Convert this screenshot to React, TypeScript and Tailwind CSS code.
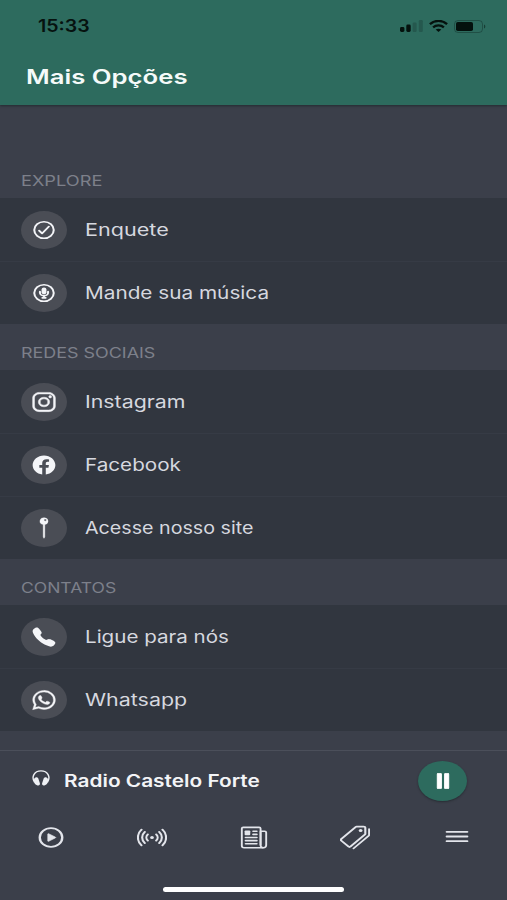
import clsx from "clsx";
import type { IconType } from "react-icons";
import {
    IoCall,
    IoCheckmarkCircleOutline,
    IoLogoFacebook,
    IoLogoInstagram,
    IoLogoWhatsapp,
    IoMenuOutline,
    IoMicCircleOutline,
    IoNewspaperOutline,
    IoPause,
    IoPin,
    IoPlayCircleOutline,
    IoPricetagsOutline,
    IoRadioOutline,
} from "react-icons/io5";

interface Option {
    label: string;
    icon: IconType;
    stretch: string;
    iconClass?: string;
}

interface Section {
    title: string;
    stretch: string;
    titleClass: string;
    options: Option[];
}

const sections: Section[] = [
    {
        title: "EXPLORE",
        stretch: "scale-x-[1.3]",
        titleClass: "h-[93px] pt-[60px]",
        options: [
            { label: "Enquete", icon: IoCheckmarkCircleOutline, stretch: "scale-x-[1.27]", iconClass: "[&_path]:[stroke-width:40px]" },
            { label: "Mande sua música", icon: IoMicCircleOutline, stretch: "scale-x-[1.22]", iconClass: "[&_path]:[stroke-width:40px]" },
        ],
    },
    {
        title: "REDES SOCIAIS",
        stretch: "scale-x-[1.28]",
        titleClass: "h-[46px] pt-[13px]",
        options: [
            { label: "Instagram", icon: IoLogoInstagram, stretch: "scale-x-[1.255]", iconClass: "[&_path]:[stroke-width:10px]" },
            { label: "Facebook", icon: IoLogoFacebook, stretch: "scale-x-[1.215]" },
            { label: "Acesse nosso site", icon: IoPin, stretch: "scale-x-[1.157]", iconClass: "[&_path]:[stroke-width:8px]" },
        ],
    },
    {
        title: "CONTATOS",
        stretch: "scale-x-[1.25]",
        titleClass: "h-[46px] pt-[13px]",
        options: [
            { label: "Ligue para nós", icon: IoCall, stretch: "scale-x-[1.21]" },
            { label: "Whatsapp", icon: IoLogoWhatsapp, stretch: "scale-x-[1.26]", iconClass: "[&_path]:[stroke-width:8px]" },
        ],
    },
];

const tabs: { name: string; icon: IconType; iconClass: string }[] = [
    { name: "Ao vivo", icon: IoPlayCircleOutline, iconClass: "[&_path:first-of-type]:[stroke-width:40px] [&_path:last-of-type]:[stroke-width:10px]" },
    { name: "Rádio", icon: IoRadioOutline, iconClass: "[&_path]:[stroke-width:36px]" },
    { name: "Notícias", icon: IoNewspaperOutline, iconClass: "ml-[2px]" },
    { name: "Promoções", icon: IoPricetagsOutline, iconClass: "[&_path:first-of-type]:[stroke-width:36px]" },
    { name: "Mais", icon: IoMenuOutline, iconClass: "[&_path]:[stroke-width:36px] ml-[2px] -mt-[2px]" },
];

function StatusBar() {
    return (
        <div className="flex h-[52px] items-center justify-between pl-[38px] pr-[21px]">
            <span className="inline-block origin-left scale-x-[1.15] text-[17px] font-semibold leading-5 text-[#06120f]">
                15:33
            </span>
            <div className="flex items-center text-[#04110d]">
                <svg className="h-3 w-[23px]" viewBox="0 0 23 12" fill="currentColor">
                    <rect x="0" y="7" width="4.4" height="5" rx="1.4" />
                    <rect x="6.3" y="4.6" width="4.4" height="7.4" rx="1.4" />
                    <rect x="12.6" y="2.5" width="4" height="9.5" rx="1.2" opacity="0.2" />
                    <rect x="18.8" y="0" width="4" height="12" rx="1.2" opacity="0.2" />
                </svg>
                <svg className="ml-[6px] h-3 w-[19px]" viewBox="0 0 19 12" fill="none" stroke="currentColor" strokeWidth="2.3">
                    <path d="M.9 4.2C5.7-.2 13.3-.2 18.1 4.2" />
                    <path d="M4.1 7.4c3-2.7 7.8-2.7 10.8 0" />
                    <path d="M9.5 12 6.7 9.6c1.6-1.3 4-1.3 5.6 0Z" fill="currentColor" stroke="none" />
                </svg>
                <svg className="ml-[6px] h-[13px] w-[32px]" viewBox="0 0 32 13">
                    <rect x=".5" y=".5" width="28" height="12" rx="3.5" fill="none" stroke="currentColor" opacity="0.3" />
                    <rect x="2" y="2" width="17" height="9" rx="1.8" fill="currentColor" />
                    <path d="M30 4.5c1.8.6 1.8 3.4 0 4Z" fill="currentColor" opacity="0.5" />
                </svg>
            </div>
        </div>
    );
}

function HeadphonesIcon({ className }: { className?: string }) {
    return (
        <svg className={className} viewBox="0 0 18 16" aria-hidden="true">
            <path d="M2.6 12.4C-1 7 2.2.9 9 .9s10 6.1 6.4 11.5" fill="none" stroke="currentColor" strokeWidth="1.4" />
            <path d="M2.4 8.2c1.5-1.5 3.4-1.2 4 .5l1.5 4.6c.4 1.6-.9 2.6-2.3 2.1C2.6 14.4 1 11.6 2.4 8.2Z" fill="currentColor" />
            <path d="M15.6 8.2c-1.5-1.5-3.4-1.2-4 .5l-1.5 4.6c-.4 1.6.9 2.6 2.3 2.1 3-1 4.6-3.8 3.2-7.2Z" fill="currentColor" />
        </svg>
    );
}

function OptionRow({ option }: { option: Option }) {
    const Icon = option.icon;
    return (
        <li className="flex h-[63px] items-center border-t border-[#363b45] pl-[21px] first:border-transparent">
            <span className="flex h-[38px] w-[46px] items-center justify-center rounded-[50%] bg-[#4a4d55] text-[#f4f5f8]">
                <Icon preserveAspectRatio="none" className={clsx("-ml-px h-[22px] w-[26px]", option.iconClass)} />
            </span>
            <span className={clsx("ml-[18px] inline-block origin-left whitespace-nowrap text-[17px] leading-6 text-[#d6d8df]", option.stretch)}>
                {option.label}
            </span>
        </li>
    );
}

export default function App() {
    return (
        <div className="flex h-[900px] w-[507px] flex-col overflow-hidden bg-[#3b3f4a] font-['Inter',sans-serif]">
            <header className="h-[105px] shrink-0 bg-[#2d6b5e] shadow-[0_1px_2px_rgba(20,30,35,0.6)]">
                <StatusBar />
                <h1 className="ml-[26px] mt-[11px] inline-block origin-left scale-x-[1.285] text-[20px] font-semibold leading-7 text-[#f5faf9]">
                    Mais Opções
                </h1>
            </header>

            <main className="h-[645px] shrink-0">
                {sections.map((section) => (
                    <section key={section.title}>
                        <h2 className={clsx("pl-[21px] text-[14px] text-[#7d808a]", section.titleClass)}>
                            <span className={clsx("block w-fit origin-left leading-8", section.stretch)}>{section.title}</span>
                        </h2>
                        <ul className="bg-[#31363f]">
                            {section.options.map((option) => (
                                <OptionRow key={option.label} option={option} />
                            ))}
                        </ul>
                    </section>
                ))}
            </main>

            <footer className="flex-1 border-t border-[#4b4f5a]">
                <div className="flex h-[59px] items-center pl-[32px] pr-[40px]">
                    <HeadphonesIcon className="-mt-[6px] h-4 w-[18px] text-[#eef0f4]" />
                    <span className="ml-[14px] inline-block origin-left scale-x-[1.225] whitespace-nowrap text-[17px] font-semibold leading-6 text-[#f3f4f7]">
                        Radio Castelo Forte
                    </span>
                    <button
                        aria-label="Pausar"
                        className="ml-auto flex h-10 w-[49px] items-center justify-center rounded-[50%] bg-[#2d6b5e] text-white shadow-[0_1px_2px_rgba(20,25,30,0.5)]"
                    >
                        <IoPause preserveAspectRatio="none" className="h-[22px] w-[26px] [&_path]:[stroke-width:20px]" />
                    </button>
                </div>
                <nav className="grid h-[54px] grid-cols-5">
                    {tabs.map(({ name, icon: Icon, iconClass }) => (
                        <button key={name} aria-label={name} className="flex items-center justify-center text-[#e3e5eb]">
                            <Icon preserveAspectRatio="none" className={clsx("h-[25px] w-[30px]", iconClass)} />
                        </button>
                    ))}
                </nav>
                <div className="mx-auto mt-[23px] h-[5px] w-[181px] rounded-full bg-white" />
            </footer>
        </div>
    );
}
